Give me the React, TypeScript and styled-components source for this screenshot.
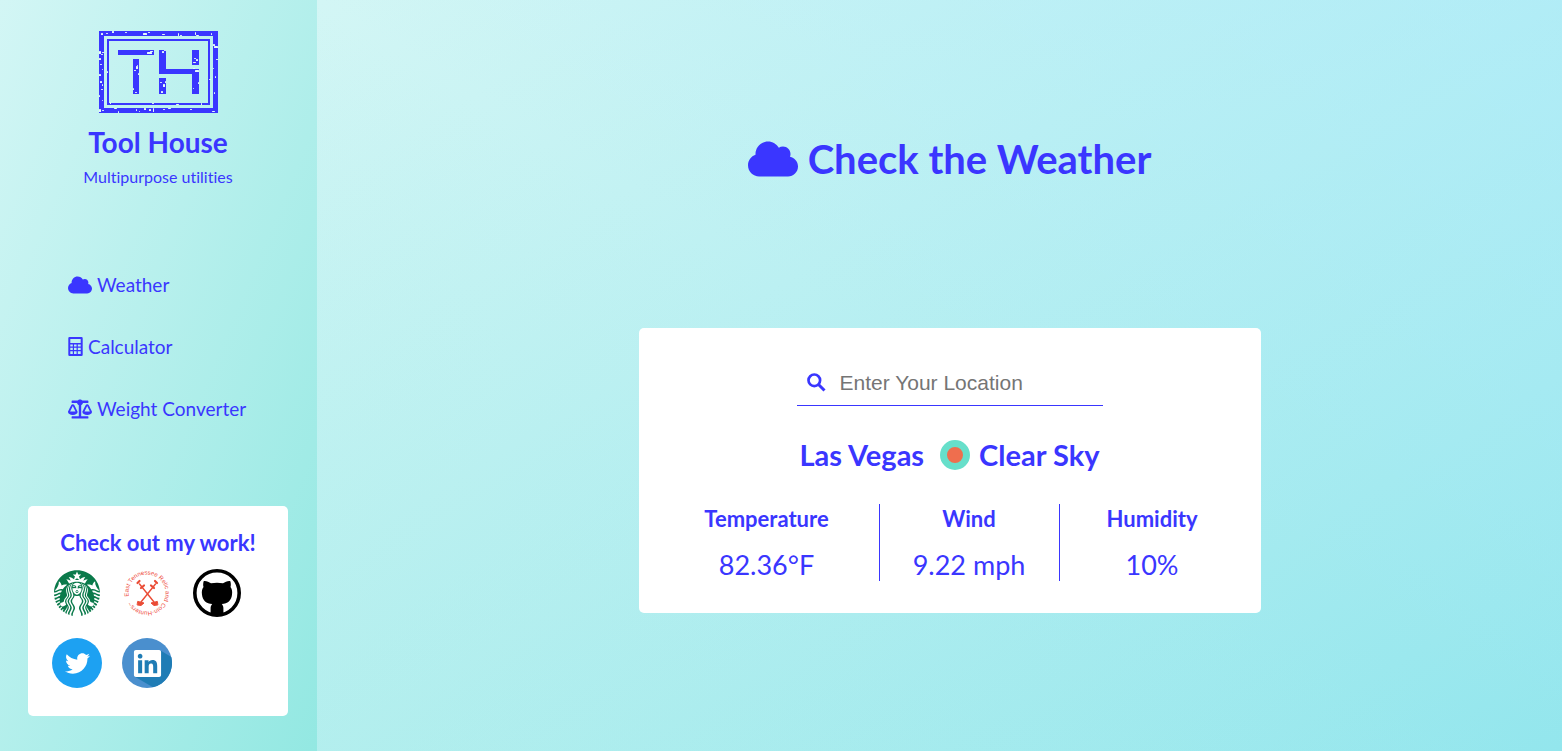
import React from 'react';
import styled, { createGlobalStyle } from 'styled-components';
import { FaCloud, FaBalanceScale, FaTwitter, FaLinkedin } from 'react-icons/fa';
import { SiStarbucks } from 'react-icons/si';

const ink = '#3a36ff';

const GlobalStyle = createGlobalStyle`
  *, *::before, *::after { box-sizing: border-box; }
  html, body, #root { height: 100%; }
  body {
    margin: 0;
    color: ${ink};
    font-family: Lato, "Open Sans", sans-serif;
    font-variant-ligatures: none;
  }
  h1, h2, h3, p, ul, dl, dd { margin: 0; padding: 0; }
  svg { display: block; flex: none; }
`;

const Page = styled.div`
  display: flex;
  min-height: 100%;
`;

const Sidebar = styled.aside`
  flex: 0 0 317px;
  display: flex;
  flex-direction: column;
  align-items: center;
  padding: 31px 29px 35px 28px;
  background: linear-gradient(to bottom right, #d3f6f5 0%, #93e8e2 100%);
`;

const BrandName = styled.h2`
  margin-top: 11px;
  font-size: 28px;
  line-height: 36px;
`;

const Tagline = styled.p`
  margin-top: 6px;
  font-size: 16px;
  line-height: 22px;
`;

const NavList = styled.ul`
  align-self: stretch;
  display: flex;
  flex-direction: column;
  gap: 38px;
  margin: 85px 0 0 40px;
  list-style: none;
`;

const NavLink = styled.a`
  display: flex;
  align-items: center;
  gap: 5px;
  color: ${ink};
  font-size: 19px;
  line-height: 24px;
  text-decoration: none;
`;

const WorkCard = styled.section`
  align-self: stretch;
  margin-top: auto;
  padding: 21px 24px 28px;
  border-radius: 5px;
  background: #fff;
`;

const WorkTitle = styled.h3`
  font-size: 22px;
  line-height: 32px;
  text-align: center;
`;

const WorkLinks = styled.div`
  display: grid;
  grid-template-columns: repeat(3, 50px);
  gap: 20px;
  margin-top: 9px;
`;

const WorkLink = styled.a<{ $fill?: string }>`
  display: flex;
  align-items: center;
  justify-content: center;
  width: 50px;
  height: 50px;
  border-radius: 50%;
  color: #fff;
  background: ${(p) => p.$fill ?? 'transparent'};
`;

const Main = styled.main`
  flex: 1;
  display: flex;
  flex-direction: column;
  align-items: center;
  padding: 130px 0 60px 20px;
  background:
    linear-gradient(to top right, rgba(178, 240, 228, 0.25) 0%, rgba(178, 238, 240, 0) 50%, rgba(174, 234, 255, 0.4) 100%),
    linear-gradient(to bottom right, #d3f6f5 0%, #93e6ed 100%);
`;

const Title = styled.h1`
  display: flex;
  align-items: center;
  gap: 10px;
  font-size: 40px;
  line-height: 58px;
`;

const WeatherCard = styled.section`
  width: 100%;
  max-width: 622px;
  margin-top: 140px;
  padding: 32px 16px;
  border-radius: 5px;
  background: #fff;
`;

const SearchForm = styled.form`
  display: flex;
  align-items: center;
  gap: 12px;
  width: 306px;
  height: 46px;
  margin: 0 auto;
  padding-left: 10px;
  border-bottom: 1px solid ${ink};
`;

const SearchInput = styled.input`
  flex: 1;
  min-width: 0;
  padding: 2px;
  border: 0;
  outline: 0;
  background: transparent;
  font: 21px "Liberation Sans", Arial, sans-serif;
  &::placeholder { color: #757575; }
`;

const Summary = styled.h2`
  display: flex;
  justify-content: center;
  align-items: center;
  margin-top: 31px;
  font-size: 29px;
  line-height: 36px;
`;

const Sun = styled.span`
  width: 30px;
  height: 30px;
  margin: 0 9px 0 16px;
  border: 7px solid #67dfca;
  border-radius: 50%;
  background: #ef6e4e;
`;

const Readings = styled.dl`
  display: grid;
  grid-template-columns: 224px 180px 1fr;
  margin-top: 31px;
  text-align: center;
`;

const Reading = styled.div`
  height: 77px;
  & + & { border-left: 1px solid ${ink}; }
`;

const Label = styled.dt`
  font-size: 22px;
  font-weight: 700;
  line-height: 30px;
`;

const Value = styled.dd`
  margin-top: 12px;
  font-size: 27px;
  line-height: 38px;
`;

/* Worn spots of the rubber stamp: x, y, width, height */
const specks = [
  [2, 2, 2, 2], [7, 2, 2, 1], [13, 0, 2, 2], [26, 1, 2, 1], [44, 2, 4, 2], [49, 1, 2, 1],
  [63, 3, 3, 1], [79, 2, 1, 3], [81, 4, 2, 1], [96, 1, 1, 3], [97, 4, 3, 1], [112, 2, 1, 2],
  [0, 20, 2, 3], [2, 23, 2, 1], [0, 27, 2, 2], [3, 21, 2, 1], [1, 33, 2, 1], [3, 38, 1, 1], [0, 43, 2, 2],
  [1, 50, 2, 2], [3, 53, 1, 2], [2, 58, 2, 1], [0, 64, 1, 2], [3, 69, 1, 1], [8, 40, 1, 2],
  [115, 15, 4, 2], [114, 13, 2, 2], [117, 28, 2, 1], [114, 37, 1, 1], [116, 45, 1, 2], [110, 48, 2, 1], [115, 61, 1, 2],
  [0, 78, 2, 3], [3, 79, 2, 1], [15, 77, 3, 1], [19, 80, 1, 2], [37, 78, 1, 2], [40, 80, 1, 1], [45, 77, 2, 2],
  [50, 78, 2, 2], [54, 77, 1, 4], [64, 78, 2, 1], [69, 77, 3, 1], [91, 78, 2, 1], [113, 80, 3, 1],
  [11, 71, 1, 2], [53, 72, 2, 1], [77, 73, 3, 1], [102, 72, 1, 2],
  [48, 21, 5, 2], [51, 20, 3, 1], [37, 35, 2, 3], [35, 39, 2, 1], [38, 34, 1, 1], [39, 42, 1, 2], [34, 57, 1, 2], [36, 61, 2, 1],
  [63, 20, 2, 2], [65, 19, 2, 1], [61, 51, 2, 1], [64, 53, 2, 3], [66, 50, 1, 2], [62, 60, 2, 2],
  [95, 27, 2, 1], [97, 28, 2, 2], [94, 31, 3, 1], [96, 39, 4, 2], [94, 37, 2, 1], [99, 51, 1, 2], [94, 57, 1, 1],
];

function StampLogo() {
  return (
    <svg width="119" height="82" viewBox="0 0 119 82" aria-label="TH" role="img">
      <g fill="none" stroke={ink}>
        <rect x="2.5" y="2.5" width="114" height="77" strokeWidth="5" />
        <rect x="9" y="9" width="101" height="64" strokeWidth="2" />
      </g>
      <g fill={ink}>
        <rect x="19" y="19" width="36" height="5" />
        <rect x="34" y="28" width="6" height="35" />
        <rect x="60" y="19" width="7" height="24" />
        <rect x="60" y="47" width="7" height="16" />
        <rect x="60" y="38" width="40" height="5" />
        <rect x="93" y="19" width="7" height="15" />
        <rect x="93" y="38" width="7" height="25" />
      </g>
      <g fill="#e6fbfb">
        {specks.map(([x, y, w, h], i) => (
          <rect key={i} x={x} y={y} width={w} height={h} rx="0.6" />
        ))}
      </g>
    </svg>
  );
}

function CalculatorIcon() {
  return (
    <svg width="15" height="20" viewBox="0 0 15 20" fill={ink} aria-hidden="true">
      <path
        fillRule="evenodd"
        d="M1.5 0h12a1.2 1.2 0 0 1 1.2 1.2v16.6a1.2 1.2 0 0 1-1.2 1.2h-12a1.2 1.2 0 0 1-1.2-1.2v-16.600a1.2 1.2 0 0 1 1.2-1.2zM2.300 2v4h10.400v-4zM2.300 7.400v2.200h2.500V7.400zM6 7.400v2.200h2.600V7.400zM9.800 7.400v2.200h2.900V7.400zM2.300 10.700v2.200h2.500v-2.200zM6 10.700v2.200h2.600v-2.200zM9.800 10.700v2.200h2.900v-2.200zM2.300 14.200v2.800h2.500v-2.800zM6 14.200v2.800h2.600v-2.800zM9.800 14.200v2.800h2.900v-2.800z"
      />
    </svg>
  );
}

function SearchIcon() {
  return (
    <svg width="19" height="19" viewBox="0 0 19 19" fill="none" stroke={ink} aria-hidden="true">
      <circle cx="7.3" cy="7.3" r="5.8" strokeWidth="2.7" />
      <path d="M11.5 11.5l6 6" strokeWidth="3" />
    </svg>
  );
}

function RelicHuntersLogo() {
  return (
    <svg width="50" height="50" viewBox="0 0 50 50" overflow="visible" aria-hidden="true">
      <defs>
        <path id="relic-ring" d="M6.8 28.5a18.5 18.5 0 1 1 36.4-7a18.5 18.5 0 1 1-36.4 7" />
      </defs>
      <text fill="#ee4a3a" fontSize="6" fontFamily="Liberation Sans, Arial, sans-serif">
        <textPath href="#relic-ring">East Tennessee Relic and Coin-Hunters~</textPath>
      </text>
      <g stroke="#ea4b35" fill="#ea4b35" strokeLinecap="round">
        <path d="M17.5 16L32 34M33.5 16L19 34" strokeWidth="1.4" fill="none" />
        <path d="M15.5 15l2-2M33 13l2 2M19 20l3-2.5M29 17.5l3 2.5" strokeWidth="2.2" fill="none" />
        <path d="M16 33.5l6 1.5-3 2.5-3.500-.5zM35 33.5l-6 1.5 3 2.5 3.500-.5z" strokeWidth="1" />
      </g>
    </svg>
  );
}

function OctocatLogo() {
  return (
    <svg width="50" height="50" viewBox="0 0 50 50" aria-hidden="true">
      <circle cx="25" cy="25" r="22.2" fill="#fff" stroke="#000" strokeWidth="3.6" />
      <path d="M11.800 13c2.600-.4 5 .9 7.200 2.300 4-.9 8-.9 12 0 2.200-1.400 4.600-2.700 7.200-2.300.8 2.200.8 4.200.3 6.100 1.400 2 2 4.400 1.500 7.600-.6 5.800-4.300 8.800-10.200 9.400 1 1.100 1.600 2.600 1.600 4.400v6.300c-4.200 1.500-8.600 1.500-12.800 0v-6.300c0-1.800.6-3.300 1.600-4.400-5.900-.6-9.600-3.600-10.200-9.400-.5-3.200.1-5.600 1.500-7.600-.5-1.900-.5-3.900.3-6.100z" />
    </svg>
  );
}

function LinkedInLogo() {
  return (
    <svg width="50" height="50" viewBox="0 0 50 50" aria-hidden="true">
      <circle cx="25" cy="25" r="25" fill="#4a8fce" />
      <path d="M38.5 12.5L49.3 19A25 25 0 0 1 31 49.3L12.5 38.5z" fill="#1f7cb5" />
      <rect x="14" y="14" width="22" height="22" fill="#1f7cb5" />
      <FaLinkedin x="10" y="10" size={31} color="#fff" />
    </svg>
  );
}

export default function App() {
  return (
    <>
      <GlobalStyle />
      <Page>
        <Sidebar>
          <StampLogo />
          <BrandName>Tool House</BrandName>
          <Tagline>Multipurpose utilities</Tagline>
          <NavList>
            <li><NavLink href="#weather"><FaCloud size={24} />Weather</NavLink></li>
            <li><NavLink href="#calculator"><CalculatorIcon />Calculator</NavLink></li>
            <li><NavLink href="#weight"><FaBalanceScale size={24} />Weight Converter</NavLink></li>
          </NavList>
          <WorkCard>
            <WorkTitle>Check out my work!</WorkTitle>
            <WorkLinks>
              <WorkLink href="#starbucks" aria-label="Starbucks"><SiStarbucks size={46} color="#0b7a4b" /></WorkLink>
              <WorkLink href="#relic-hunters" aria-label="East Tennessee Relic and Coin-Hunters"><RelicHuntersLogo /></WorkLink>
              <WorkLink href="#github" aria-label="GitHub"><OctocatLogo /></WorkLink>
              <WorkLink href="#twitter" aria-label="Twitter" $fill="#1da1f2"><FaTwitter size={25} /></WorkLink>
              <WorkLink href="#linkedin" aria-label="LinkedIn"><LinkedInLogo /></WorkLink>
            </WorkLinks>
          </WorkCard>
        </Sidebar>
        <Main>
          <Title><FaCloud size={50} />Check the Weather</Title>
          <WeatherCard>
            <SearchForm>
              <SearchIcon />
              <SearchInput aria-label="Location" placeholder="Enter Your Location" />
            </SearchForm>
            <Summary>Las Vegas<Sun />Clear Sky</Summary>
            <Readings>
              <Reading><Label>Temperature</Label><Value>82.36°F</Value></Reading>
              <Reading><Label>Wind</Label><Value>9.22 mph</Value></Reading>
              <Reading><Label>Humidity</Label><Value>10%</Value></Reading>
            </Readings>
          </WeatherCard>
        </Main>
      </Page>
    </>
  );
}
